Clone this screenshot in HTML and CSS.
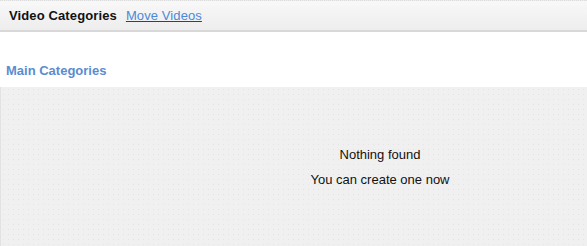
FILE: index.html
```html
<!DOCTYPE html>
<html lang="en">
<head>
    <meta charset="UTF-8">
    <title>Video Categories</title>
    <link rel="stylesheet" href="styles.css">
</head>
<body>
    <div class="header">
        <span class="title">Video Categories</span>
        <a href="#" class="tab-link">Move Videos</a>
    </div>

    <div class="section">
        <h2>Main Categories</h2>
    </div>

    <div class="empty">
        <p>Nothing found</p>
        <p>You can create one now</p>
    </div>
</body>
</html>
```

FILE: styles.css
```css
body {
    margin: 0;
    padding: 0;
    background: #fff;
    font-family: 'Liberation Sans', Arial, sans-serif;
    font-size: 13px;
    color: #111;
}

.header {
    height: 29px;
    border-top: 1px dotted #dcdcdc;
    border-bottom: 2px solid #d8d8d8;
    background: linear-gradient(#f8f8f8, #ededed);
    display: flex;
    align-items: center;
    gap: 9px;
    padding: 0 0 0 9px;
}

.title {
    font-weight: bold;
    font-size: 13px;
    letter-spacing: 0.12px;
    color: #111;
}

.tab-link {
    color: #4d88d6;
    letter-spacing: 0.1px;
    text-decoration: underline;
    text-decoration-color: #34349a;
}

.section {
    height: 55px;
    display: flex;
    align-items: flex-end;
    padding-left: 6px;
}

.section h2 {
    margin: 0 0 9px 0;
    font-size: 13px;
    font-weight: bold;
    color: #5b8ccf;
}

.empty {
    height: 159px;
    background-color: #f0f0f0;
    background-image: radial-gradient(#e4e4e4 0.7px, transparent 0.9px);
    background-size: 5px 5px;
    border-left: 1px solid #e2e2e2;
    padding: 60px 0 0 172px;
    text-align: center;
    box-sizing: border-box;
}

.empty p {
    margin: 0 0 10px 0;
    line-height: 15px;
    font-size: 13px;
}
```
